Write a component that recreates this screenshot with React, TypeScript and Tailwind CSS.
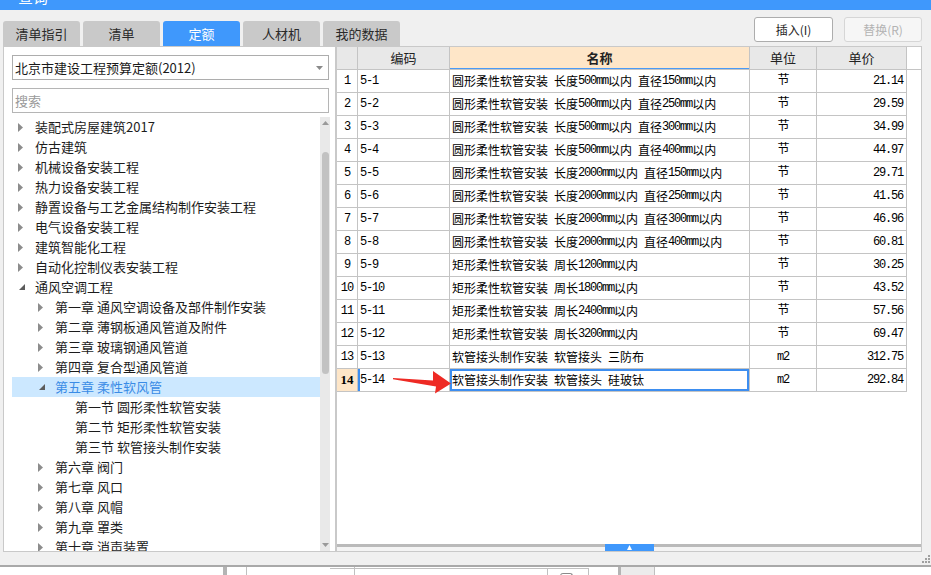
const tabs = ["清单指引", "清单", "定额", "人材机", "我的数据"];

type Node = { t: string; l: number; s: "c" | "o" | "n"; sel?: boolean };

const tree: Node[] = [
  { t: "装配式房屋建筑2017", l: 0, s: "c" },
  { t: "仿古建筑", l: 0, s: "c" },
  { t: "机械设备安装工程", l: 0, s: "c" },
  { t: "热力设备安装工程", l: 0, s: "c" },
  { t: "静置设备与工艺金属结构制作安装工程", l: 0, s: "c" },
  { t: "电气设备安装工程", l: 0, s: "c" },
  { t: "建筑智能化工程", l: 0, s: "c" },
  { t: "自动化控制仪表安装工程", l: 0, s: "c" },
  { t: "通风空调工程", l: 0, s: "o" },
  { t: "第一章 通风空调设备及部件制作安装", l: 1, s: "c" },
  { t: "第二章 薄钢板通风管道及附件", l: 1, s: "c" },
  { t: "第三章 玻璃钢通风管道", l: 1, s: "c" },
  { t: "第四章 复合型通风管道", l: 1, s: "c" },
  { t: "第五章 柔性软风管", l: 1, s: "o", sel: true },
  { t: "第一节 圆形柔性软管安装", l: 2, s: "n" },
  { t: "第二节 矩形柔性软管安装", l: 2, s: "n" },
  { t: "第三节 软管接头制作安装", l: 2, s: "n" },
  { t: "第六章 阀门", l: 1, s: "c" },
  { t: "第七章 风口", l: 1, s: "c" },
  { t: "第八章 风帽", l: 1, s: "c" },
  { t: "第九章 罩类", l: 1, s: "c" },
  { t: "第十章 消声装置", l: 1, s: "c" },
];

const pad = ["pl-[6px]", "pl-[26px]", "pl-[46px]"];

const rows = [
  ["5-1", "圆形柔性软管安装 长度500mm以内 直径150mm以内", "节", "21.14"],
  ["5-2", "圆形柔性软管安装 长度500mm以内 直径250mm以内", "节", "29.59"],
  ["5-3", "圆形柔性软管安装 长度500mm以内 直径300mm以内", "节", "34.99"],
  ["5-4", "圆形柔性软管安装 长度500mm以内 直径400mm以内", "节", "44.97"],
  ["5-5", "圆形柔性软管安装 长度2000mm以内 直径150mm以内", "节", "29.71"],
  ["5-6", "圆形柔性软管安装 长度2000mm以内 直径250mm以内", "节", "41.56"],
  ["5-7", "圆形柔性软管安装 长度2000mm以内 直径300mm以内", "节", "46.96"],
  ["5-8", "圆形柔性软管安装 长度2000mm以内 直径400mm以内", "节", "60.81"],
  ["5-9", "矩形柔性软管安装 周长1200mm以内", "节", "30.25"],
  ["5-10", "矩形柔性软管安装 周长1800mm以内", "节", "43.52"],
  ["5-11", "矩形柔性软管安装 周长2400mm以内", "节", "57.56"],
  ["5-12", "矩形柔性软管安装 周长3200mm以内", "节", "69.47"],
  ["5-13", "软管接头制作安装 软管接头 三防布", "m2", "312.75"],
  ["5-14", "软管接头制作安装 软管接头 硅玻钛", "m2", "292.84"],
];

const cell = "flex h-full shrink-0 items-center border-r border-[#c4c4c4]";
const mono = "font-['Liberation_Mono','Noto_Sans_CJK_SC',monospace] tracking-[-1.2px]";

// ascii runs in the name column get the narrow fixed-width look
function Name({ text }: { text: string }) {
  return (
    <>
      {text.split(/([ -~]+)/).map((part, i) =>
        /^[ -~]+$/.test(part) ? (
          <span key={i} className={mono}>
            {part}
          </span>
        ) : (
          <span key={i}>{part}</span>
        ),
      )}
    </>
  );
}

function Caret({ open }: { open: boolean }) {
  if (open)
    return (
      <svg width="6" height="6" className="ml-[1px]">
        <path d="M6 0V6H0Z" fill="#5c5c5c" />
      </svg>
    );
  return (
    <svg width="5" height="9">
      <path d="M0 0L5 4.5L0 9Z" fill="#8c8c8c" />
    </svg>
  );
}

function TreeScrollbar() {
  return (
    <div className="flex w-[10px] flex-col bg-[#e9e9e9]">
      <div className="flex h-[12px] items-center justify-center">
        <svg width="7" height="4">
          <path d="M0 4H7L3.5 0Z" fill="#9a9a9a" />
        </svg>
      </div>
      <div className="h-[23px]" />
      <div className="mx-auto h-[222px] w-[7px] rounded-full bg-[#c2c2c2]" />
      <div className="flex-1" />
      <div className="flex h-[12px] items-center justify-center">
        <svg width="7" height="4">
          <path d="M0 0H7L3.5 4Z" fill="#9a9a9a" />
        </svg>
      </div>
    </div>
  );
}

function LeftPanel() {
  return (
    <div className="flex w-[333px] flex-col border border-[#c9c9c9] bg-white">
      <div className="ml-[8px] mr-[6px] mt-[8px] flex h-[25px] items-center justify-between border border-[#adadad] pl-[2px] pr-[5px] text-[13px] text-[#1a1a1a]">
        <span>北京市建设工程预算定额(2012)</span>
        <svg width="7" height="4">
          <path d="M0 0H7L3.5 4Z" fill="#8a8a8a" />
        </svg>
      </div>
      <div className="ml-[8px] mr-[6px] mt-[8px] flex h-[25px] items-center border border-[#b5b5b5] pl-[2px] text-[13px] text-[#9a9a9a]">
        搜索
      </div>
      <div className="mt-[4px] flex min-h-0 flex-1">
        <div className="ml-[8px] w-[308px] overflow-hidden">
          {tree.map((n) => (
            <div
              key={n.t}
              className={`flex h-[20px] items-center text-[13px] ${pad[n.l]} ${
                n.sel ? "bg-[#cce8ff] text-[#3a8ce6]" : "text-[#1c1c1c]"
              }`}
            >
              <div className="flex w-[17px] shrink-0 items-center">
                {n.s !== "n" && <Caret open={n.s === "o"} />}
              </div>
              <span className="whitespace-pre">{n.t}</span>
            </div>
          ))}
        </div>
        <TreeScrollbar />
      </div>
    </div>
  );
}

function RightPanel() {
  return (
    <div className="flex w-[586px] flex-col border border-[#c9c9c9] bg-white">
      <div className="min-h-0 flex-1">
        <div className="flex h-[23px] border-b border-[#c4c4c4] text-[13px] text-[#222]">
          <div className={`${cell} w-[21px] bg-[#e8e8e8]`} />
          <div className={`${cell} w-[92px] justify-center bg-[#e8e8e8]`}>编码</div>
          <div className={`${cell} w-[300px] justify-center bg-[#fee6c8] font-bold shadow-[inset_0_-1px_0_#4a9af5]`}>
            名称
          </div>
          <div className={`${cell} w-[67px] justify-center bg-[#e8e8e8]`}>单位</div>
          <div className={`${cell} w-[90px] justify-center bg-[#e8e8e8]`}>单价</div>
        </div>
        {rows.map(([code, name, unit, price], i) => {
          const cur = i === 13;
          return (
            <div key={code} className="flex h-[23px] w-[570px] border-b border-[#c4c4c4] text-[12px] text-black">
              <div
                className={`${cell} w-[21px] justify-center ${
                  cur
                    ? "bg-[#fee6c8] font-['Liberation_Serif',serif] text-[13px] font-bold"
                    : "font-['Liberation_Mono',monospace] tracking-[-1px]"
                }`}
              >
                {i + 1}
              </div>
              <div className={`${cell} w-[92px] pl-[2px] ${mono} ${cur ? "shadow-[inset_2px_0_0_#3d8ef0]" : ""}`}>
                {code}
              </div>
              <div
                className={`${cell} w-[300px] whitespace-pre pl-[2px] ${
                  cur ? "shadow-[inset_0_0_0_2px_#3d8ef0]" : ""
                }`}
              >
                <Name text={name} />
              </div>
              <div className={`${cell} w-[67px] justify-center ${mono}`}>{unit}</div>
              <div className={`${cell} w-[90px] justify-end pr-[3px] ${mono}`}>{price}</div>
            </div>
          );
        })}
      </div>
      <div className="flex h-[7px] shrink-0">
        <div className="w-[268px] border-t-[3px] border-[#bababa] bg-[#f4f4f4]" />
        <div className="flex w-[49px] items-center justify-center bg-[#3f98fc]">
          <svg width="5" height="5">
            <path d="M0 5H5L2.5 0Z" fill="#fff" />
          </svg>
        </div>
        <div className="flex-1 border-t-[3px] border-[#bababa] bg-[#f4f4f4]" />
      </div>
    </div>
  );
}

function BottomStrip() {
  return (
    <div className="flex h-[10px] shrink-0 border-t-2 border-[#a9a9a9] bg-white">
      <div className="w-[223px]" />
      <div className="w-[4px] bg-[#b4b4b4]" />
      <div className="w-[20px] border-r border-[#c0c0c0]" />
      <div className="w-[108px] border-r border-[#c0c0c0]">
        <div className="ml-[83px] mt-[1px] border-t border-[#c0c0c0]" />
      </div>
      <div className="mt-[1px] w-[193px] border-r border-t border-[#c0c0c0]" />
      <div className="mt-[1px] w-[41px] border-r border-t border-[#c0c0c0] pl-[12px] pt-[4px]">
        <div className="h-[8px] w-[13px] rounded-t-[3px] border border-b-0 border-[#8a8a8a]" />
      </div>
      <div className="w-[29px]" />
      <div className="w-[3px] bg-[#b4b4b4]" />
      <div className="w-[34px] border-r border-[#c0c0c0] bg-[#ececec]" />
    </div>
  );
}

export default function App() {
  return (
    <div className="relative flex h-[575px] w-[931px] flex-col overflow-hidden bg-[#f0f0f0] font-['Noto_Sans_CJK_SC',sans-serif] text-[#1f1f1f]">
      <div className="h-[10px] shrink-0 overflow-hidden bg-[#3f98fc] pl-[18px]">
        <div className="-mt-[13px] text-[15px] leading-[20px] text-white">查询</div>
      </div>

      <div className="flex h-[36px] shrink-0 pl-[3px] pr-[9px]">
        <div className="mt-auto flex gap-[3px]">
          {tabs.map((t) => (
            <div
              key={t}
              className={`flex h-[25px] w-[77px] items-center justify-center rounded-t-[3px] text-[13px] ${
                t === "定额" ? "bg-[#3f98fc] text-white" : "bg-[#c9c9c9] text-[#2a2a2a]"
              }`}
            >
              {t}
            </div>
          ))}
        </div>
        <div className="ml-auto mt-[7px] flex h-[25px] gap-[11px] text-[12px]">
          <button className="w-[79px] rounded-[3px] border border-[#adadad] bg-white text-[#1f1f1f]">插入(I)</button>
          <button className="w-[78px] rounded-[3px] border border-[#d6d6d6] bg-[#f6f6f6] text-[#b3b3b3]">替换(R)</button>
        </div>
      </div>

      <div className="flex h-[506px] shrink-0 pl-[3px]">
        <LeftPanel />
        <RightPanel />
      </div>

      <div className="flex h-[13px] shrink-0 items-center justify-end pr-[1px]">
        <svg width="9" height="9">
          {[
            [7, 1],
            [4, 4],
            [7, 4],
            [1, 7],
            [4, 7],
            [7, 7],
          ].map(([x, y]) => (
            <rect key={`${x}-${y}`} x={x} y={y} width="2" height="2" fill="#a0a0a0" />
          ))}
        </svg>
      </div>

      <BottomStrip />

      <svg className="absolute left-[390px] top-[368px]" width="64" height="30">
        <polygon points="3,10 43,12.5 43,3 61,15.5 45,25.5 46,18.5 3,11.2" fill="#ee2a24" />
      </svg>
    </div>
  );
}
